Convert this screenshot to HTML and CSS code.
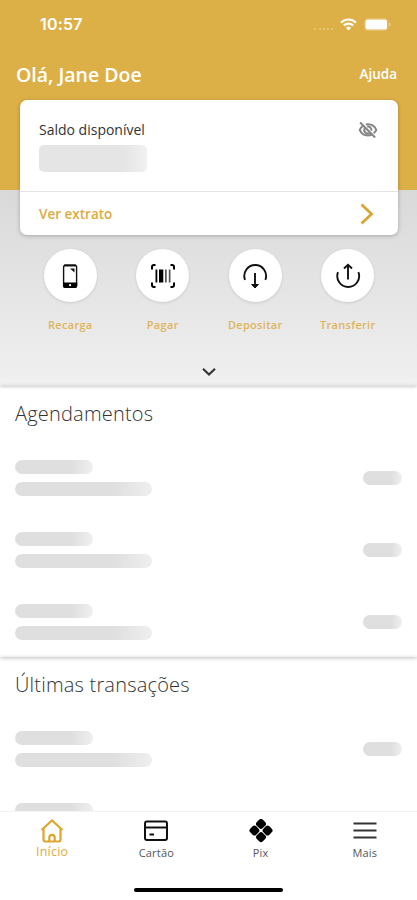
FILE: index.html
```html
<!DOCTYPE html>
<html lang="pt-BR">
<head>
  <meta charset="UTF-8">
  <meta name="viewport" content="width=device-width, initial-scale=1.0">
  <title>Início</title>
  <link rel="stylesheet" href="styles.css">
</head>
<body>
  <div class="app">
    <main class="content">
      <div class="hero">
        <div class="status-bar">
          <span class="time">10:57</span>
          <div class="status-icons">
            <span class="signal"></span>
            <svg width="17" height="13" viewBox="0 0 17 13">
              <g fill="none" stroke="#fff" stroke-width="2.2">
                <path d="M1 4.6a10.6 10.6 0 0 1 15 0"/>
                <path d="M3.8 7.6a6.6 6.6 0 0 1 9.4 0"/>
              </g>
              <path d="M8.5 12.6L5.9 9.8a3.7 3.7 0 0 1 5.2 0z" fill="#fff"/>
            </svg>
            <svg width="27" height="13" viewBox="0 0 27 13">
              <rect x=".5" y=".5" width="23.5" height="12" rx="3.5" fill="none" stroke="#fff" stroke-opacity=".2"/>
              <rect x="1.500" y="1.500" width="21.500" height="10" rx="2" fill="#fff"/>
              <path d="M25 4.5q1.5.5 1.500 2t-1.500 2z" fill="#fff" fill-opacity=".4"/>
            </svg>
          </div>
        </div>

        <div class="greeting">
          <h1>Olá, Jane Doe</h1>
          <a class="help">Ajuda</a>
        </div>

        <div class="card">
          <div class="balance">
            <div>
              <p>Saldo disponível</p>
              <div class="skeleton amount"></div>
            </div>
            <svg class="eye" width="20" height="20" viewBox="0 0 24 24" fill="none" stroke="#858585" stroke-width="2.400">
              <path d="M6.500 6.800C4.300 8 2.900 9.800 2.100 11.800c1.600 4 5.400 6.700 9.900 6.700 1.500 0 2.900-.3 4.200-.8M9.500 5.400c.8-.2 1.600-.3 2.500-.3 4.500 0 8.300 2.700 9.900 6.700-.7 1.700-1.800 3.100-3.200 4.200"/>
              <path d="M8.200 9.800a4.200 4.200 0 0 0 5.800 5.800M11 7.800a4.200 4.200 0 0 1 5 5"/>
              <path d="M2.500 3L20.500 21"/>
            </svg>
          </div>
          <div class="statement">
            <span>Ver extrato</span>
            <svg width="14" height="22" viewBox="0 0 14 22" fill="none" stroke="#d9a636" stroke-width="2.800">
              <path d="M1.500 1.500L11.500 11L1.500 20.500"/>
            </svg>
          </div>
        </div>

        <div class="actions">
          <div class="action">
            <div class="circle">
              <svg width="26" height="26" viewBox="0 0 26 26">
                <rect x="6.600" y="2.100" width="13" height="22" rx="1.800" fill="none" stroke="#111" stroke-width="1.400"/>
                <path d="M6 19.500h14.200V23q0 2-2 2H8q-2 0-2-2z" fill="#000"/>
                <path d="M7 2.500h12" stroke="#111" stroke-width="2"/>
                <path d="M13 5.500h4.500v4z" fill="#111"/>
                <circle cx="13.100" cy="22.200" r="1.100" fill="#fff"/>
              </svg>
            </div>
            <span>Recarga</span>
          </div>
          <div class="action">
            <div class="circle">
              <svg width="26" height="26" viewBox="0 0 26 26">
                <path d="M2 6.500V4q0-2 2-2h1.500M20.500 2H22q2 0 2 2v2.500M24 19.500V22q0 2-2 2h-1.500M5.500 24H4q-2 0-2-2v-2.500" fill="none" stroke="#000" stroke-width="2"/>
                <path d="M5.500 6.500h1.800v13H5.500zM9 6.500h4.300v13H9z" fill="#000"/>
                <path d="M15 6.500h1.700v13H15zM18.800 6.500h1.700v13h-1.700z" fill="#555"/>
              </svg>
            </div>
            <span>Pagar</span>
          </div>
          <div class="action">
            <div class="circle">
              <svg width="26" height="26" viewBox="0 0 26 26" fill="none" stroke="#111" stroke-width="1.900">
                <path d="M3 16.800a10.900 10.900 0 1 1 20.400 0"/>
                <path d="M13 10v13"/>
                <path d="M9.600 21.500h6.800L13 25z" fill="#111" stroke-width="1"/>
              </svg>
            </div>
            <span>Depositar</span>
          </div>
          <div class="action">
            <div class="circle">
              <svg width="26" height="26" viewBox="0 0 26 26" fill="none" stroke="#111" stroke-width="1.900">
                <path d="M3 9.200a10.900 10.900 0 1 0 20.400 0"/>
                <path d="M13 16.500V3"/>
                <path d="M9 5.500L13 1.700L17 5.500"/>
              </svg>
            </div>
            <span>Transferir</span>
          </div>
        </div>

        <svg class="expand" width="16" height="10" viewBox="0 0 16 10" fill="none" stroke="#333" stroke-width="2.100">
          <path d="M2 1.800L8 7.500L14 1.800"/>
        </svg>
      </div>

      <section class="list">
        <h2>Agendamentos</h2>
        <div class="row">
          <div class="lines">
            <div class="skeleton short"></div>
            <div class="skeleton long"></div>
          </div>
          <div class="skeleton value"></div>
        </div>
        <div class="row">
          <div class="lines">
            <div class="skeleton short"></div>
            <div class="skeleton long"></div>
          </div>
          <div class="skeleton value"></div>
        </div>
        <div class="row">
          <div class="lines">
            <div class="skeleton short"></div>
            <div class="skeleton long"></div>
          </div>
          <div class="skeleton value"></div>
        </div>
      </section>

      <section class="list">
        <h2>Últimas transações</h2>
        <div class="row">
          <div class="lines">
            <div class="skeleton short"></div>
            <div class="skeleton long"></div>
          </div>
          <div class="skeleton value"></div>
        </div>
        <div class="row">
          <div class="lines">
            <div class="skeleton short"></div>
            <div class="skeleton long"></div>
          </div>
          <div class="skeleton value"></div>
        </div>
      </section>
    </main>

    <nav class="tab-bar">
      <div class="tabs">
        <a class="tab active">
          <svg width="24" height="24" viewBox="0 0 24 24" fill="none" stroke="#dda62f" stroke-width="2.200">
            <path d="M1.500 11L12 1.500L22.500 11"/>
            <path d="M3.500 10V20.500q0 2 2 2h13q2 0 2-2V10"/>
            <path d="M9.300 22.500v-4a2.700 2.700 0 0 1 5.400 0v4"/>
          </svg>
          <span>Início</span>
        </a>
        <a class="tab">
          <svg width="24" height="24" viewBox="0 0 24 24" fill="none" stroke="#111" stroke-width="2">
            <rect x="1" y="2.500" width="22" height="18.500" rx="2"/>
            <path d="M1 8.500h22"/>
            <path d="M5.500 15.500H10"/>
          </svg>
          <span>Cartão</span>
        </a>
        <a class="tab">
          <svg width="24" height="24" viewBox="0 0 24 24" fill="#000">
            <g transform="rotate(45 12 11.500)">
              <rect x="3.100" y="2.600" width="8.500" height="8.500" rx="2.600"/>
              <rect x="12.400" y="2.600" width="8.500" height="8.500" rx="2.600"/>
              <rect x="3.100" y="11.900" width="8.500" height="8.500" rx="2.600"/>
              <rect x="12.400" y="11.900" width="8.500" height="8.500" rx="2.600"/>
            </g>
          </svg>
          <span>Pix</span>
        </a>
        <a class="tab">
          <svg width="24" height="24" viewBox="0 0 24 24" stroke="#333" stroke-width="2">
            <path d="M.5 4.500h23M.5 11.500h23M.5 18.500h23"/>
          </svg>
          <span>Mais</span>
        </a>
      </div>
      <div class="home-indicator"></div>
    </nav>
  </div>
</body>
</html>
```

FILE: styles.css
```css
* {
  box-sizing: border-box;
}

body {
  margin: 0;
  font-family: "Open Sans", "Noto Sans", sans-serif;
  color: #333;
  background-color: #fff;
}

h1, h2, p {
  margin: 0;
}

svg {
  display: block;
  flex-shrink: 0;
}

.app {
  width: 417px;
  height: 900px;
  display: flex;
  flex-direction: column;
  overflow: hidden;
}

.content {
  height: 811px;
  overflow: hidden;
}

/* gold header with the grey shortcuts area below it */
.hero {
  height: 386px;
  background: linear-gradient(#ddb047, #ddb047) no-repeat 0 0 / 100% 190px,
    linear-gradient(#d9d9d9 190px, #f0f0f0 386px);
  box-shadow: 0 1px 3px rgba(0, 0, 0, 0.2);
}

.status-bar {
  height: 48px;
  padding: 0 26px 0 40px;
  display: flex;
  justify-content: space-between;
  align-items: center;
  color: #fff;
}

.time {
  font-family: Inter, sans-serif;
  font-size: 16px;
  font-weight: 600;
  letter-spacing: 0.2px;
}

.status-icons {
  display: flex;
  align-items: center;
  gap: 7px;
}

.signal {
  width: 19px;
  margin-top: 9px;
  border-top: 2px dotted rgba(255, 255, 255, 0.25);
}

.greeting {
  height: 52px;
  padding: 0 20px 0 16px;
  display: flex;
  justify-content: space-between;
  align-items: center;
  color: #fff;
}

.greeting h1 {
  font-size: 19.5px;
  font-weight: 600;
}

.help {
  font-size: 13.5px;
  font-weight: 600;
}

.card {
  height: 135px;
  margin: 0 19px 0 20px;
  background-color: #fff;
  border-radius: 7px;
  box-shadow: 0 1px 4px rgba(0, 0, 0, 0.25);
}

.balance {
  height: 92px;
  padding: 20px 20px 0 19px;
  display: flex;
  justify-content: space-between;
  border-bottom: 1px solid #e4e4e4;
}

.balance p {
  font-size: 14px;
  line-height: 20px;
}

.statement {
  height: 43px;
  padding: 0 24px 0 19px;
  display: flex;
  justify-content: space-between;
  align-items: center;
  font-size: 13.5px;
  font-weight: 600;
  color: #dcaa3f;
}

.skeleton {
  height: 14px;
  border-radius: 7px;
  background: linear-gradient(90deg, #dfdfdf 72%, #eeeeee 98%);
}

.amount {
  width: 108px;
  height: 27px;
  margin-top: 5px;
  border-radius: 5px;
  background: linear-gradient(90deg, #e5e5e5 78%, #f1f1f1);
}

.actions {
  padding: 14px 23px 0 24px;
  display: grid;
  grid-template-columns: repeat(4, 1fr);
}

.action {
  display: flex;
  flex-direction: column;
  align-items: center;
  gap: 15px;
  font-size: 11px;
  font-weight: 600;
  line-height: 16px;
  letter-spacing: 0.3px;
  color: #dfb55b;
}

.circle {
  width: 53px;
  height: 53px;
  display: flex;
  justify-content: center;
  align-items: center;
  border-radius: 50%;
  background-color: #fff;
  box-shadow: 0 1px 3px rgba(0, 0, 0, 0.12);
}

.expand {
  margin: 34px auto 0;
}

.list {
  height: 271px;
  padding: 0 15px;
  box-shadow: 0 1px 4px rgba(0, 0, 0, 0.25);
}

.list h2 {
  height: 56px;
  font-size: 20px;
  font-weight: 300;
  line-height: 56px;
  letter-spacing: 0.2px;
}

.row {
  height: 72px;
  display: flex;
  justify-content: space-between;
  align-items: center;
}

.lines {
  display: flex;
  flex-direction: column;
  gap: 8px;
}

.short {
  width: 78px;
}

.long {
  width: 137px;
}

.value {
  width: 39px;
}

.tab-bar {
  height: 89px;
  border-top: 1px solid #f3f3f3;
  background-color: #fff;
}

.tabs {
  height: 76px;
  padding-top: 7px;
  display: grid;
  grid-template-columns: repeat(4, 1fr);
}

.tab {
  display: flex;
  flex-direction: column;
  align-items: center;
  font-size: 11px;
  line-height: 20px;
  letter-spacing: 0.2px;
  color: #555;
}

.active {
  font-size: 12.5px;
  line-height: 18px;
  color: #dfab3c;
}

.home-indicator {
  width: 149px;
  height: 4px;
  margin: 0 auto;
  border-radius: 2px;
  background-color: #000;
}
```
